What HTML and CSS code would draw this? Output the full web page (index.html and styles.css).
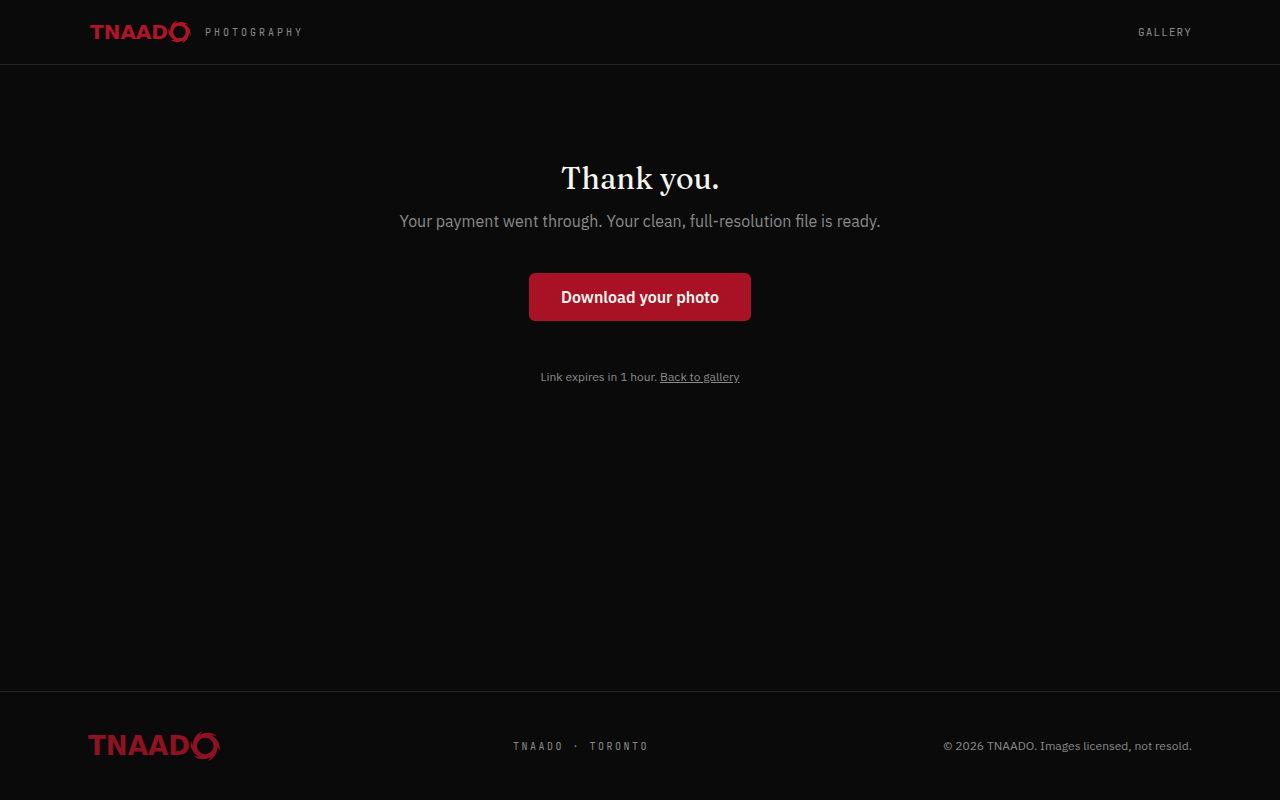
FILE: index.html
```html
<!DOCTYPE html>
<html lang="en">
<head>
  <meta charset="UTF-8">
  <meta name="viewport" content="width=device-width, initial-scale=1.0">
  <title>Thank you – TNAADO Photography</title>
  <link rel="stylesheet" href="styles.css">
</head>
<body>
  <header class="site-header">
    <div class="wrap">
      <a class="brand" href="#">
        <svg class="logo" viewBox="0 0 100 22" role="img" aria-label="TNAADO">
          <defs>
            <path id="blade" d="M83.500 4.400 C87.500 .3 94 -.5 98.500 3.600 C95.500 2.600 93.500 3 91.500 4.200 Z"/>
            <g id="ring">
              <circle cx="89.500" cy="11" r="7.900" fill="none" stroke="currentColor" stroke-width="3.200"/>
              <use href="#blade"/>
              <use href="#blade" transform="rotate(60 89.500 11)"/>
              <use href="#blade" transform="rotate(120 89.500 11)"/>
              <use href="#blade" transform="rotate(180 89.500 11)"/>
              <use href="#blade" transform="rotate(240 89.500 11)"/>
              <use href="#blade" transform="rotate(300 89.500 11)"/>
            </g>
          </defs>
          <text class="logo-text" x="0" y="18">TNAAD</text>
          <use href="#ring"/>
        </svg>
        <span class="brand-sub">PHOTOGRAPHY</span>
      </a>
      <nav class="nav">
        <a class="nav-link" href="#">GALLERY</a>
      </nav>
    </div>
  </header>

  <main class="thanks">
    <h1 class="title">Thank you.</h1>
    <p class="lead">Your payment went through. Your clean, full-resolution file is ready.</p>
    <button class="btn" type="button">Download your photo</button>
    <p class="note">Link expires in 1 hour. <a href="#">Back to gallery</a></p>
  </main>

  <footer class="site-footer">
    <div class="wrap">
      <svg class="logo logo-large" viewBox="0 0 100 22" role="img" aria-label="TNAADO">
        <text class="logo-text" x="0" y="18">TNAAD</text>
        <use href="#ring"/>
      </svg>
      <span class="place">TNAADO · TORONTO</span>
      <span class="copyright">© 2026 TNAADO. Images licensed, not resold.</span>
    </div>
  </footer>
</body>
</html>
```
FILE: styles.css
```css
* {
  box-sizing: border-box;
}
body {
  margin: 0;
  min-height: 100vh;
  display: flex;
  flex-direction: column;
  background: #0a0a0a;
  color: #8a8a8a;
  font-family: "IBM Plex Sans", Roboto, sans-serif;
}
.wrap {
  max-width: 1200px;
  margin: 0 auto;
  padding: 0 48px;
  display: flex;
  align-items: center;
  justify-content: space-between;
}
.site-header {
  border-bottom: 1px solid #242424;
}
.site-header .wrap {
  min-height: 64px;
}
.brand {
  display: flex;
  align-items: center;
  gap: 15px;
  padding-left: 2px;
  text-decoration: none;
}
.logo {
  display: block;
  height: 22px;
  width: 100px;
  color: #b01428;
  fill: currentColor;
  overflow: visible;
}
.logo-large {
  height: 30px;
  width: 131px;
  opacity: 0.8;
}
.logo-text {
  font-family: "DejaVu Sans", sans-serif;
  font-size: 20px;
  font-weight: bold;
}
.brand-sub,
.nav-link,
.place {
  font-family: "JetBrains Mono", "DejaVu Sans Mono", monospace;
  font-size: 10px;
  color: #8a8a8a;
}
.brand-sub {
  letter-spacing: 0.3em;
}
.nav {
  display: flex;
}
.nav-link {
  font-size: 11px;
  letter-spacing: 0.1em;
  text-decoration: none;
}
.thanks {
  flex: 1;
  padding: 96px 24px;
  text-align: center;
}
.title {
  margin: 0 0 12px;
  color: #f5f5f0;
  font-family: Fraunces, "Liberation Serif", serif;
  font-size: 30px;
  font-weight: 500;
  line-height: 36px;
}
.lead {
  margin: 0 0 40px;
  font-size: 16px;
  line-height: 24px;
}
.btn {
  min-height: 48px;
  padding: 0 32px;
  border: none;
  border-radius: 6px;
  background: #a81224;
  color: #f5f5f0;
  font-family: inherit;
  font-size: 16px;
  font-weight: 600;
  cursor: pointer;
}
.note {
  margin: 48px 0 0;
  font-size: 12px;
  line-height: 16px;
}
.note a {
  color: inherit;
}
.site-footer {
  border-top: 1px solid #242424;
  padding: 39px 0;
}
.place {
  letter-spacing: 0.25em;
}
.copyright {
  font-size: 12px;
  line-height: 16px;
}
```
